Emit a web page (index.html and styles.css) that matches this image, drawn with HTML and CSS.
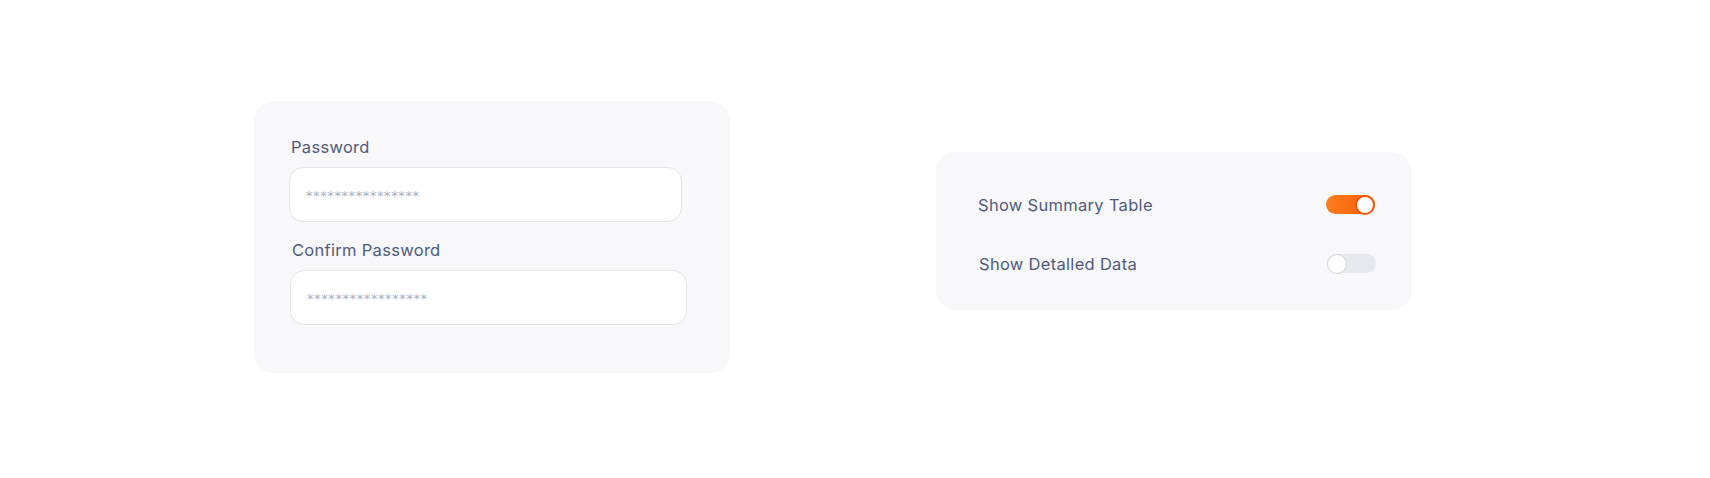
FILE: index.html
```html
<!DOCTYPE html>
<html lang="en">
<head>
<meta charset="utf-8">
<title>Settings</title>
<link rel="stylesheet" href="styles.css">
</head>
<body>
<main class="stage">
  <section class="card card-form">
    <label class="field-label">Password</label>
    <div class="input input-a"><span class="mask">****************</span></div>
    <label class="field-label field-label-2">Confirm Password</label>
    <div class="input input-b"><span class="mask">*****************</span></div>
  </section>
  <section class="card card-toggles">
    <div class="row">
      <span class="row-label">Show Summary Table</span>
      <span class="toggle toggle-on"><span class="knob"></span></span>
    </div>
    <div class="row">
      <span class="row-label">Show Detalled Data</span>
      <span class="toggle toggle-off"><span class="knob"></span></span>
    </div>
  </section>
</main>
</body>
</html>
```

FILE: styles.css
```css
* { box-sizing: border-box; }
html, body {
  margin: 0;
  background: #ffffff;
  font-family: "Inter", "Open Sans", sans-serif;
}
.stage {
  display: flex;
  align-items: flex-start;
  gap: 206px;
  padding-left: 254px;
  height: 478px;
}
.card {
  width: 476px;
  background: #f8f8fa;
  border-radius: 20px;
}
.card-form {
  margin-top: 101px;
  padding: 36px 0 48px 35px;
  display: flex;
  flex-direction: column;
  align-items: flex-start;
}
.field-label {
  display: block;
  font-size: 16.5px;
  line-height: 20px;
  color: #4f5b7b;
  letter-spacing: 0.3px;
  margin-left: 2px;
}
.field-label-2 {
  margin-top: 18px;
  margin-left: 3px;
}
.input {
  margin-top: 10px;
  height: 55px;
  background: #ffffff;
  border: 1.5px solid #e3e4ea;
  border-radius: 14px;
  display: flex;
  align-items: center;
  padding-left: 16px;
}
.input-a { width: 393px; }
.input-b { width: 397px; margin-left: 1px; }
.mask {
  font-family: "DejaVu Sans", sans-serif;
  font-size: 13px;
  color: #a9afc0;
  letter-spacing: 0.6px;
  line-height: 14px;
  padding-top: 3px;
}
.card-toggles {
  margin-top: 152px;
  padding: 23px 37px 17px 42px;
}
.row {
  height: 59px;
  display: flex;
  align-items: center;
  justify-content: space-between;
}
.row-label {
  font-size: 16.5px;
  line-height: 20px;
  color: #4f5b7b;
  letter-spacing: 0.3px;
}
.row + .row .row-label { margin-left: 1px; }
.toggle {
  position: relative;
  width: 49px;
  height: 19px;
  border-radius: 10px;
  display: block;
}
.toggle-on {
  background: linear-gradient(90deg, #ff7d1f 0%, #f45d05 100%);
}
.toggle-off {
  background: #e7e8ed;
  margin-right: -1px;
}
.knob {
  position: absolute;
  top: -0.5px;
  width: 20px;
  height: 20px;
  border-radius: 50%;
  background: #ffffff;
}
.toggle-on .knob {
  right: 0;
  border: 2px solid #ef5a05;
}
.toggle-off .knob {
  left: 0;
  border: 1.5px solid #cfd1d8;
}
```
